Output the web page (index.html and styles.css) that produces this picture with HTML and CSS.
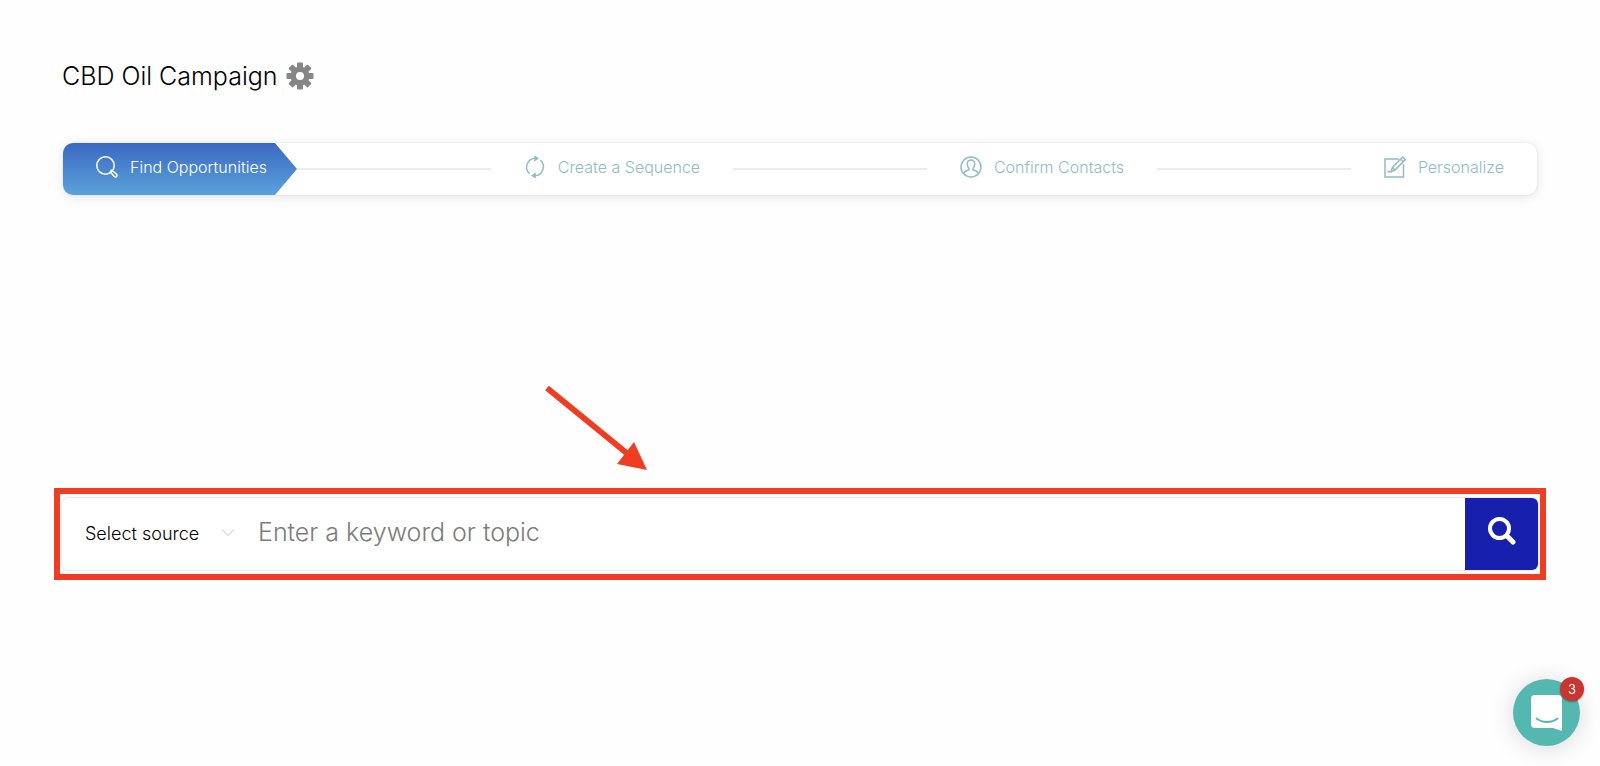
FILE: index.html
```html
<!DOCTYPE html>
<html lang="en">
    <head>
        <meta charset="utf-8">
        <title>CBD Oil Campaign</title>
        <link rel="stylesheet" href="styles.css">
    </head>
    <body>
        <main class="page">
            <header class="page-header">
                <h1>CBD Oil Campaign</h1>
                <button class="settings" type="button" aria-label="Campaign settings">
                    <svg viewBox="0 0 28 28" width="28" height="28">
                        <g fill="#868686">
                            <rect x="11" y="0.5" width="6" height="27" rx="1"/>
                            <rect x="11" y="0.5" width="6" height="27" rx="1" transform="rotate(45 14 14)"/>
                            <rect x="11" y="0.5" width="6" height="27" rx="1" transform="rotate(90 14 14)"/>
                            <rect x="11" y="0.5" width="6" height="27" rx="1" transform="rotate(135 14 14)"/>
                            <circle cx="14" cy="14" r="9.5"/>
                        </g>
                        <circle cx="14" cy="14" r="4" fill="#fff"/>
                    </svg>
                </button>
            </header>
            <nav class="steps">
                <a class="step active" href="#find">
                    <svg viewBox="0 0 22 22" width="22" height="22">
                        <circle cx="9.5" cy="9.5" r="8.7"/>
                        <path d="M14.8 16.4a1.2 1.2 0 0 1 1.7-1.7l4 3.4a1.6 1.6 0 0 1-2.3 2.4z"/>
                    </svg>
                    Find Opportunities
                </a>
                <span class="line"></span>
                <a class="step" href="#sequence">
                    <svg viewBox="0 0 22 22" width="22" height="22">
                        <path d="M5.6 17.8A8.9 8.9 0 0 1 11.5 2.3"/>
                        <path d="M16.4 4.2A8.9 8.9 0 0 1 10.5 19.7"/>
                        <path d="M11 .6l2.6 1.8L11 4.2zM11 17.8l-2.6 1.8 2.6 1.8z" fill="currentColor"/>
                    </svg>
                    Create a Sequence
                </a>
                <span class="line"></span>
                <a class="step" href="#contacts">
                    <svg viewBox="0 0 22 22" width="22" height="22">
                        <circle cx="11" cy="11" r="10"/>
                        <path d="M11 4C8.7 4 7.3 5.7 7.3 8c0 1.8.6 3.2 1.7 4.2v1.6c-2.3.6-4.2 1.3-5.3 3.6M11 4c2.3 0 3.7 1.7 3.7 4 0 1.8-.6 3.2-1.7 4.2v1.6c2.3.6 4.2 1.3 5.3 3.6"/>
                    </svg>
                    Confirm Contacts
                </a>
                <span class="line"></span>
                <a class="step" href="#personalize">
                    <svg viewBox="0 0 22 22" width="22" height="22">
                        <path d="M15 3H1v18h18.5V8"/>
                        <path d="M18.7 1l2.6 2.6L11 14l-4 1.5 1.4-4zM16.5 3.2l2.6 2.6M8.4 11.5l2.6 2.5M3.5 15.8H8"/>
                    </svg>
                    Personalize
                </a>
            </nav>
            <div class="highlight">
                <svg class="arrow" viewBox="0 0 106 90" width="106" height="90">
                    <path d="M4 2l82 67" stroke="#ee3d23" stroke-width="6"/>
                    <path d="M91 56l13 28-30-6z" fill="#ee3d23"/>
                </svg>
                <form class="search">
                    <label class="source">
                        <select aria-label="Source">
                            <option>Select source</option>
                        </select>
                        <svg viewBox="0 0 12 8" width="12" height="8">
                            <path d="M.5 1L6 6.5 11.5 1" fill="none" stroke="#bcc0c6"/>
                        </svg>
                    </label>
                    <input type="text" placeholder="Enter a keyword or topic" aria-label="Keyword or topic">
                    <button class="submit" type="submit" aria-label="Search">
                        <svg viewBox="0 0 28 28" width="28" height="28" fill="none" stroke="#fff">
                            <circle cx="11.5" cy="11.5" r="9.5" stroke-width="4"/>
                            <path d="M19 19l6 6" stroke-width="5" stroke-linecap="round"/>
                        </svg>
                    </button>
                </form>
            </div>
        </main>
        <button class="chat" type="button" aria-label="Open chat">
            <svg viewBox="0 0 32 36" width="32" height="36">
                <path d="M4 0h23a4 4 0 0 1 4 4v32l-9-3H4a4 4 0 0 1-4-4V4a4 4 0 0 1 4-4z" fill="#fff"/>
                <path d="M5.5 23.5c6 4.6 15 4.6 21 0" fill="none" stroke="#55b8b0" stroke-width="2" stroke-linecap="round"/>
            </svg>
            <span class="badge">3</span>
        </button>
    </body>
</html>
```

FILE: styles.css
```css
* {
    box-sizing: border-box;
}
body {
    margin: 0;
    background-color: #fefefe;
    color: #000;
    font-family: Inter, "Liberation Sans", sans-serif;
    font-size: 16px;
}
button {
    border: 0;
    padding: 0;
    cursor: pointer;
    font-family: inherit;
}
.page {
    padding: 60px 62px 0;
}
.page-header {
    display: flex;
    align-items: center;
    gap: 8px;
}
h1 {
    margin: 0;
    font-size: 25px;
    font-weight: 300;
    line-height: 32px;
}
.settings {
    display: flex;
    background: none;
}

.steps {
    display: flex;
    align-items: center;
    height: 52px;
    margin: 51px 1px 0;
    border-radius: 10px;
    background-color: #fff;
    box-shadow: 0 0 2px rgba(0,0,0,.12), 0 2px 12px rgba(0,0,0,.1);
}
.step {
    display: flex;
    align-items: center;
    gap: 12px;
    height: 52px;
    padding: 0 33px 4px;
    color: #8fbcc6;
    font-weight: 300;
    text-decoration: none;
    white-space: nowrap;
}
.step svg {
    fill: none;
    stroke: currentColor;
    stroke-width: 1.5;
}
.step.active {
    padding-right: 30px;
    border-radius: 10px 0 0 10px;
    background-image: linear-gradient(#3b68c2, #5aa2da);
    clip-path: polygon(0 0, calc(100% - 22px) 0, 100% 50%, calc(100% - 22px) 100%, 0 100%);
    color: #fff;
}
.line {
    flex: 1;
    height: 2px;
    background-color: #ececee;
}

.highlight {
    position: relative;
    margin: 293px -8px 0;
    padding: 4px 2px;
    border: 6px solid #ee3d23;
    background-color: #fafafa;
}
.arrow {
    position: absolute;
    left: 483px;
    bottom: 98px;
    overflow: visible;
}
.search {
    display: flex;
    height: 72px;
    border-radius: 6px;
    background-color: #fff;
    box-shadow: 0 0 0 1px #e9ebed;
    overflow: hidden;
}
.source {
    display: flex;
    align-items: center;
    gap: 22px;
    padding: 0 24px 2px 23px;
}
.source select {
    appearance: none;
    border: 0;
    padding: 0;
    background: none;
    color: #000;
    font-family: inherit;
    font-size: 18px;
    font-weight: 300;
}
.search input {
    flex: 1;
    min-width: 0;
    border: 0;
    padding: 0 0 4px;
    background: none;
    font-family: inherit;
    font-size: 25px;
    font-weight: 300;
}
.search input::placeholder {
    color: #7c7c7c;
}
.submit {
    display: flex;
    align-items: center;
    justify-content: center;
    width: 73px;
    padding-bottom: 6px;
    background-color: #1620ac;
}

.chat {
    position: fixed;
    right: 20px;
    bottom: 20px;
    display: flex;
    align-items: center;
    justify-content: center;
    width: 67px;
    height: 67px;
    border-radius: 50%;
    background-color: #55b8b0;
    box-shadow: 0 2px 24px rgba(0,0,0,.15);
}
.badge {
    position: absolute;
    top: -2px;
    right: -4px;
    width: 24px;
    height: 24px;
    border-radius: 50%;
    background-color: #c93632;
    box-shadow: 0 1px 2px rgba(0,0,0,.4);
    color: #fff;
    font-size: 13px;
    line-height: 24px;
}
```
